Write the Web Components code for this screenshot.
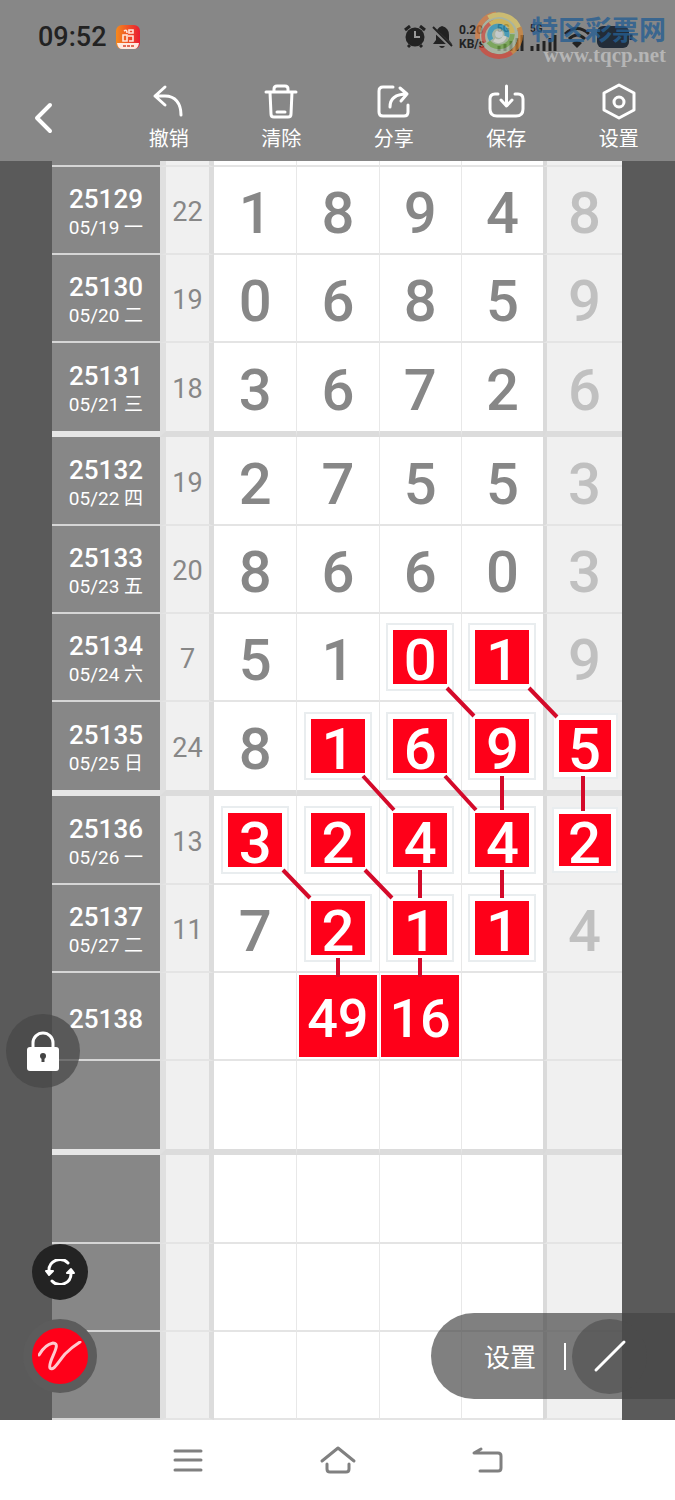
<!DOCTYPE html>
<html lang="zh-CN">
<head>
<meta charset="utf-8">
<meta name="viewport" content="width=device-width, initial-scale=1">
<title>走势图</title>
<style>
    body {
        margin: 0;
        background: #fff;
        font-family: Roboto, 'Noto Sans CJK SC', sans-serif;
        --c-bar: #878787;
        --c-side: #5a5a5a;
        --c-mark: #fe0019;
        --c-glass: rgba(70, 70, 70, 0.7);
    }
</style>
</head>
<body>
<trend-app></trend-app>

<script>
const ICONS = {
    back: '<path d="M15 3 L2 16 L15 29" stroke-width="4"/>',
    undo: '<path d="M12 2 L2 11 L12 20 M2 11 H12 C22 11 28 18 28 30" stroke-width="3"/>',
    clear: '<path d="M1 7 H31 M9 7 V4 Q9 1 12 1 H20 Q23 1 23 4 V7 M5 7 L6 29 Q6 32 9 32 H23 Q26 32 26 29 L27 7 M12 27 H20" stroke-width="3"/>',
    share: '<path d="M15 2 H5 Q1 2 1 6 V27 Q1 31 5 31 H26 Q30 31 30 27 V20 M12 22 C12 14 17 9 29 9 M22 3 L29 9 L23 16" stroke-width="3"/>',
    save: '<path d="M8 9 H5 Q0 9 0 14 V24 Q0 31 7 31 H26 Q33 31 33 24 V14 Q33 9 28 9 H25 M16.5 1 V20 M11 15 L16.5 21 L22 15" stroke-width="3"/>',
    gear: '<path d="M16 0 L31 8 V25 L16 33 L1 25 V8 Z" stroke-width="3"/><circle cx="16" cy="17" r="5" stroke-width="3"/>'
};

const baseButton = `
    button {
        display: flex;
        align-items: center;
        justify-content: center;
        padding: 0;
        border: 0;
        background: none;
        color: inherit;
        font: inherit;
    }
    svg {
        display: block;
        overflow: visible;
        fill: none;
        stroke: currentColor;
        stroke-linecap: round;
        stroke-linejoin: round;
    }
`;

class StatusBar extends HTMLElement {
    constructor() {
        super();
        this.attachShadow({ mode: 'open' });
    }

    connectedCallback() {
        this.shadowRoot.innerHTML = `
      <style>
        :host {
            position: relative;
            display: flex;
            align-items: center;
            justify-content: space-between;
            height: 74px;
            padding: 0 40px 0 38px;
            color: #222;
        }
        .left, .right { display: flex; align-items: center; }
        .left { gap: 9px; }
        .right { gap: 6px; }
        .time { font-size: 27px; line-height: 32px; font-weight: 500; }
        .speed { display: grid; width: 32px; font-size: 12px; line-height: 14px; font-weight: 700; white-space: nowrap; }
        .signal { display: grid; width: 27px; font-size: 10px; line-height: 10px; font-weight: 700; }
        svg { display: block; }
        .watermark {
            position: absolute;
            top: 9px;
            right: 9px;
            display: flex;
            gap: 7px;
        }
        .site { display: grid; justify-items: end; padding-top: 6px; }
        .name { font: 700 27px/32px 'Liberation Sans', 'Noto Sans CJK SC', sans-serif; color: rgba(37, 94, 146, 0.8); }
        .url { font: 700 21px/16px 'Liberation Serif', serif; color: rgba(190, 190, 190, 0.85); }
      </style>
      <div class="left">
        <span class="time">09:52</span>
        <svg width="24" height="24" viewBox="0 0 24 24">
          <defs>
            <linearGradient id="app" x1="0" x2="1"><stop offset="0" stop-color="#f58a1c"/><stop offset="1" stop-color="#ea1b32"/></linearGradient>
          </defs>
          <rect width="24" height="24" rx="6" fill="url(#app)"/>
          <path d="M8 6 Q11 4 11 8 M13 5 h4 v3 h-4z M7 10 h4 v6 h-4z M12 11 h5 v5 h-4" fill="none" stroke="#ffe6dc" stroke-width="1.6"/>
          <path d="M1 18 H23 Q22 24 18 24 H6 Q2 24 1 18Z" fill="#ffe9df"/>
          <path d="M7 21 H18" stroke="#e46b55" stroke-width="2" stroke-dasharray="3 1"/>
        </svg>
      </div>
      <div class="right">
        <svg width="22" height="24" viewBox="0 0 22 24">
          <path d="M1 5 L6 1 M21 5 L16 1 M4 22 L6 20 M18 22 L16 20" stroke="#222" stroke-width="3"/>
          <circle cx="11" cy="12" r="9.500" fill="#222"/>
          <path d="M11 6 V12 H16" fill="none" stroke="#999" stroke-width="2"/>
        </svg>
        <svg width="21" height="24" viewBox="0 0 21 24">
          <path d="M10 1 Q17 3 17 10 V15 L20 19 H1 L4 15 V10 Q4 3 10 1Z M7 21 H13 Q10 25 7 21Z" fill="#222"/>
          <path d="M0 3 L20 22" stroke="#878787" stroke-width="4"/>
          <path d="M1 2 L20 21" stroke="#222" stroke-width="2"/>
        </svg>
        <span class="speed"><span>0.20</span><span>KB/s</span></span>
        <span class="signal">5G
          <svg width="27" height="17" viewBox="0 0 27 17"><path d="M2 17 V12 M8 17 V10 M14 17 V7 M20 17 V4 M25 17 V1" stroke="#222" stroke-width="3"/></svg>
        </span>
        <span class="signal">5G
          <svg width="27" height="17" viewBox="0 0 27 17"><path d="M2 17 V12 M8 17 V10 M14 17 V7 M20 17 V4 M25 17 V1" stroke="#222" stroke-width="3"/></svg>
        </span>
        <svg width="28" height="23" viewBox="0 0 28 23" fill="none" stroke="#222" stroke-width="3">
          <path d="M2 8 Q14 -3 26 8 M6 13 Q14 5 22 13"/>
          <path d="M9 17 Q14 13 19 17 L14 22Z" fill="#222" stroke="none"/>
        </svg>
        <svg width="38" height="24" viewBox="0 0 38 24"><rect y="1" width="32" height="22" rx="6" fill="#222c38"/><path d="M34 9 V15" stroke="#222c38" stroke-width="3"/></svg>
      </div>
      <div class="watermark">
        <svg width="50" height="52" viewBox="-1 -1 52 54" fill="none" stroke-width="5" opacity="0.65">
          <circle cx="25" cy="26" r="20" fill="#b9cdb0" stroke="none"/>
          <path d="M3 30 A22 22 0 0 1 22 4" stroke="#e8803e"/>
          <path d="M14 8 A22 22 0 0 1 46 20" stroke="#f0d868"/>
          <path d="M46 18 A22 22 0 0 1 32 47" stroke="#e08a30"/>
          <path d="M38 44 A22 22 0 0 1 6 38" stroke="#e0402f"/>
          <path d="M10 34 A16 16 0 0 1 20 12" stroke="#e05040" stroke-width="4"/>
          <path d="M16 15 A14 14 0 0 1 39 24" stroke="#f0cc48" stroke-width="5"/>
          <path d="M39 25 A14 14 0 0 1 14 33" stroke="#78b848" stroke-width="5"/>
          <path d="M17 31 A9 9 0 1 1 33 28" stroke="#2aa6d0" stroke-width="5"/>
          <path d="M20 31 A7 7 0 0 0 31 27" stroke="#f0f3e8" stroke-width="4"/>
          <circle cx="25" cy="25" r="4" fill="#e4eef0" stroke="none"/>
        </svg>
        <div class="site"><span class="name">特区彩票网</span><span class="url">www.tqcp.net</span></div>
      </div>
    `;
    }
}

class ToolButton extends HTMLElement {
    constructor() {
        super();
        this.attachShadow({ mode: 'open' });
    }

    connectedCallback() {
        this.shadowRoot.innerHTML = `
      <style>
        ${baseButton}
        :host { display: block; }
        button { flex-direction: column; gap: 8px; width: 100%; }
        .label { font: 400 20px/24px 'Noto Sans CJK SC', sans-serif; }
      </style>
      <button type="button">
        <svg width="32" height="33" viewBox="0 0 32 33">${ICONS[this.getAttribute('icon')]}</svg>
        <span class="label"><slot></slot></span>
      </button>
    `;
    }
}

class ToolBar extends HTMLElement {
    constructor() {
        super();
        this.attachShadow({ mode: 'open' });
    }

    connectedCallback() {
        this.shadowRoot.innerHTML = `
      <style>
        ${baseButton}
        :host {
            display: grid;
            grid-template-columns: repeat(6, 1fr);
            align-items: center;
            height: 87px;
            color: #fff;
        }
        .back { justify-self: start; padding-left: 35px; }
      </style>
      <button class="back" type="button" aria-label="返回">
        <svg width="18" height="32" viewBox="0 0 18 32">${ICONS.back}</svg>
      </button>
      <tool-button icon="undo">撤销</tool-button>
      <tool-button icon="clear">清除</tool-button>
      <tool-button icon="share">分享</tool-button>
      <tool-button icon="save">保存</tool-button>
      <tool-button icon="gear">设置</tool-button>
    `;
    }
}

class TrendChart extends HTMLElement {
    constructor() {
        super();
        this.attachShadow({ mode: 'open' });
    }

    // A digit followed by * is marked by the user, = is a predicted pair
    get rows() {
        return [
            ['25129', '05/19 一', '22', '1', '8', '9', '4', '8'],
            ['25130', '05/20 二', '19', '0', '6', '8', '5', '9'],
            ['25131', '05/21 三', '18', '3', '6', '7', '2', '6'],
            ['25132', '05/22 四', '19', '2', '7', '5', '5', '3'],
            ['25133', '05/23 五', '20', '8', '6', '6', '0', '3'],
            ['25134', '05/24 六', '7', '5', '1', '0*', '1*', '9'],
            ['25135', '05/25 日', '24', '8', '1*', '6*', '9*', '5*'],
            ['25136', '05/26 一', '13', '3*', '2*', '4*', '4*', '2*'],
            ['25137', '05/27 二', '11', '7', '2*', '1*', '1*', '4'],
            ['25138', '', '', '', '49=', '16=', '', ''],
            ['', '', '', '', '', '', '', ''],
            ['', '', '', '', '', '', '', ''],
            ['', '', '', '', '', '', '', ''],
            ['', '', '', '', '', '', '', '']
        ];
    }

    cell(value, name) {
        if (value.endsWith('*')) return `<td class="${name}"><span class="mark">${value.slice(0, -1)}</span></td>`;
        if (value.endsWith('=')) return `<td class="${name}"><span class="guess">${value.slice(0, -1)}</span></td>`;
        return `<td class="${name} plain">${value}</td>`;
    }

    row(r, index) {
        // Four draws per group, the first visible row is the second of its group
        const pos = (index + 1) % 4;
        const kind = pos === 0 ? 'first' : pos === 3 ? 'last' : '';
        return `
        <tr class="${kind}">
            <th scope="row"><span class="issue">${r[0]}</span>${r[1] ? `<span class="date">${r[1]}</span>` : ''}</th>
            <td class="sum">${r[2]}</td>
            ${r.slice(3, 7).map(v => this.cell(v, 'num')).join('')}
            ${this.cell(r[7], 'bonus')}
        </tr>`;
    }

    connectedCallback() {
        const links = [
            'M395 527 L422 555', 'M477 527 L505 556',
            'M311 615 L342 649', 'M393 615 L424 649', 'M450 615 V649', 'M531 615 V650',
            'M231 709 L258 737', 'M313 709 L340 737', 'M368 709 V737', 'M450 709 V737',
            'M286 797 V816', 'M368 797 V816'
        ];

        this.shadowRoot.innerHTML = `
      <style>
        :host { position: relative; display: block; overflow: hidden; }
        table {
            width: 100%;
            table-layout: fixed;
            border-collapse: separate;
            border-spacing: 0;
        }
        .c-issue { width: 108px; }
        .c-sum { width: 54px; }
        .c-bonus { width: 79px; }
        th, td {
            box-sizing: border-box;
            height: 88px;
            padding: 0;
            text-align: center;
            vertical-align: middle;
            border: 0 solid #e4e4e4;
            border-bottom-width: 2px;
        }
        tr.first > * { height: 89px; }
        tr.last > * { height: 94px; border-bottom: 6px solid #dcdcdc; }
        tr.edge > * { height: 6px; }
        th {
            background: #878787;
            color: #fff;
            padding-top: 6px;
            border-bottom-color: #d6d6d6;
            font-weight: 500;
        }
        tr.last > th { border-bottom-color: #e6e6e6; }
        tr.edge > th, tr.edge > td { padding: 0; }
        .issue, .date { display: block; }
        .issue { font-size: 26px; line-height: 30px; }
        .date { font-size: 19px; line-height: 28px; font-weight: 400; }
        .sum {
            background: #f0f0f0;
            color: #878787;
            padding-top: 4px;
            border-left: 6px solid #e0e0e0;
            border-right: 5px solid #dcdcdc;
            font-size: 27px;
            line-height: 30px;
        }
        .num, .bonus { font-size: 58px; line-height: 60px; font-weight: 500; }
        .num { background: #fff; color: #878787; }
        .num + .num { border-left: 1px solid #e8e8e8; }
        .bonus { background: #f0f0f0; color: #c0c0c0; border-left: 4px solid #dadada; }
        .plain { padding-top: 6px; }
        .mark, .guess {
            display: block;
            margin: 0 auto;
            background: var(--c-mark);
            color: #fff;
        }
        .mark {
            width: 54px;
            height: 54px;
            line-height: 60px;
            box-shadow: 0 0 0 5px #fff, 0 0 0 7px #e9edef;
        }
        .bonus .mark { width: 52px; height: 52px; line-height: 58px; }
        .guess { width: 78px; height: 82px; font-size: 54px; line-height: 88px; }
        .links {
            position: absolute;
            inset: 0;
            width: 100%;
            height: 100%;
            fill: none;
            stroke: #d40a2a;
            stroke-width: 4;
        }
      </style>
      <table>
        <colgroup><col class="c-issue"><col class="c-sum"><col><col><col><col><col class="c-bonus"></colgroup>
        <tbody>
            <tr class="edge"><th></th><td class="sum"></td>${'<td class="num"></td>'.repeat(4)}<td class="bonus"></td></tr>
            ${this.rows.map((r, i) => this.row(r, i)).join('')}
        </tbody>
      </table>
      <svg class="links" viewBox="0 0 570 1259" preserveAspectRatio="none"><path d="${links.join(' ')}"/></svg>
    `;
    }
}

class RoundButton extends HTMLElement {
    constructor() {
        super();
        this.attachShadow({ mode: 'open' });
    }

    connectedCallback() {
        this.shadowRoot.innerHTML = `
      <style>
        ${baseButton}
        :host { display: block; color: #fff; }
        button { width: 74px; height: 74px; border-radius: 50%; background: var(--c-glass); }
        :host([kind="sync"]) button { width: 56px; height: 56px; background: #232323; }
        :host([kind="brush"]) button { border: 9px solid #5c5c5c; background: var(--c-mark); }
      </style>
      <button type="button" aria-label="${this.getAttribute('label')}"><slot></slot></button>
    `;
    }
}

class DrawPanel extends HTMLElement {
    constructor() {
        super();
        this.attachShadow({ mode: 'open' });
    }

    connectedCallback() {
        this.shadowRoot.innerHTML = `
      <style>
        ${baseButton}
        :host {
            box-sizing: border-box;
            display: flex;
            align-items: center;
            width: 244px;
            height: 86px;
            padding-left: 53px;
            border-radius: 43px 0 0 43px;
            background: rgba(68, 68, 68, 0.68);
            color: #fff;
        }
        .set { font: 400 26px/32px 'Noto Sans CJK SC', sans-serif; }
        .bar { width: 2px; height: 27px; margin: 0 6px 0 28px; background: #fff; }
        .line { width: 75px; height: 75px; border-radius: 50%; background: rgba(75, 75, 75, 0.6); }
      </style>
      <button class="set" type="button">设置</button>
      <span class="bar"></span>
      <button class="line" type="button" aria-label="直线">
        <svg width="30" height="30" viewBox="0 0 30 30"><path d="M1 29 L29 1" stroke-width="3"/></svg>
      </button>
    `;
    }
}

class NavBar extends HTMLElement {
    constructor() {
        super();
        this.attachShadow({ mode: 'open' });
    }

    connectedCallback() {
        this.shadowRoot.innerHTML = `
      <style>
        ${baseButton}
        :host {
            display: flex;
            align-items: center;
            justify-content: center;
            height: 80px;
            background: #fff;
            color: #808080;
        }
        button { width: 150px; height: 60px; }
        svg { stroke-width: 3; }
      </style>
      <button type="button" aria-label="最近任务"><svg width="28" height="22" viewBox="0 0 28 22"><path d="M1 2 H27 M1 11 H27 M1 21 H27"/></svg></button>
      <button type="button" aria-label="主页"><svg width="34" height="28" viewBox="0 0 34 28"><path d="M1 15 L17 2 L33 15 M6 18 V23 Q6 26 9 26 H25 Q28 26 28 23 V18"/></svg></button>
      <button type="button" aria-label="返回"><svg width="28" height="26" viewBox="0 0 28 26"><path d="M7 2 L0 6 H24 Q27 6 27 9 V21 Q27 24 24 24 H6"/></svg></button>
    `;
    }
}

class TrendApp extends HTMLElement {
    constructor() {
        super();
        this.attachShadow({ mode: 'open' });
    }

    connectedCallback() {
        this.shadowRoot.innerHTML = `
      <style>
        :host { display: block; }
        header { background: var(--c-bar); }
        main { position: relative; padding: 0 53px 0 52px; background: var(--c-side); }
        svg { display: block; }
        .lock, .tools, draw-panel { position: absolute; }
        .lock { left: 6px; bottom: 332px; }
        .tools {
            left: 23px;
            bottom: 27px;
            display: flex;
            flex-direction: column;
            align-items: center;
            gap: 19px;
        }
        draw-panel { right: 0; bottom: 21px; }
      </style>
      <header>
        <status-bar></status-bar>
        <tool-bar></tool-bar>
      </header>
      <main>
        <trend-chart></trend-chart>
        <round-button class="lock" kind="lock" label="锁定">
          <svg width="34" height="40" viewBox="0 0 34 40">
            <path d="M7 17 V12 A10 10 0 0 1 27 12 V17" fill="none" stroke="#fff" stroke-width="3"/>
            <rect x="1" y="16" width="32" height="24" rx="3" fill="#fff"/>
            <circle cx="17" cy="25" r="3" fill="#444"/><path d="M17 25 V31" stroke="#444" stroke-width="3"/>
          </svg>
        </round-button>
        <div class="tools">
          <round-button kind="sync" label="刷新">
            <svg width="30" height="26" viewBox="0 0 30 26" fill="none" stroke="#fff" stroke-width="3" stroke-linecap="round">
              <path d="M4 12 A11 11 0 0 1 23 4 M26 14 A11 11 0 0 1 7 22"/>
              <path d="M1 12 H8 L4 16Z M22 14 H29 L26 10Z" fill="#fff" stroke-width="2" stroke-linejoin="round"/>
            </svg>
          </round-button>
          <round-button kind="brush" label="画笔">
            <svg width="44" height="30" viewBox="0 0 44 30" fill="none" stroke="#ffc9cf" stroke-width="3" stroke-linecap="round">
              <path d="M1 14 C5 7 10 3 15 2 C25 2 9 21 12 27 C15 31 21 20 27 13 Q34 6 42 1"/>
            </svg>
          </round-button>
        </div>
        <draw-panel></draw-panel>
      </main>
      <nav-bar></nav-bar>
    `;
    }
}

customElements.define('status-bar', StatusBar);
customElements.define('tool-button', ToolButton);
customElements.define('tool-bar', ToolBar);
customElements.define('trend-chart', TrendChart);
customElements.define('round-button', RoundButton);
customElements.define('draw-panel', DrawPanel);
customElements.define('nav-bar', NavBar);
customElements.define('trend-app', TrendApp);
</script>
</body>
</html>
